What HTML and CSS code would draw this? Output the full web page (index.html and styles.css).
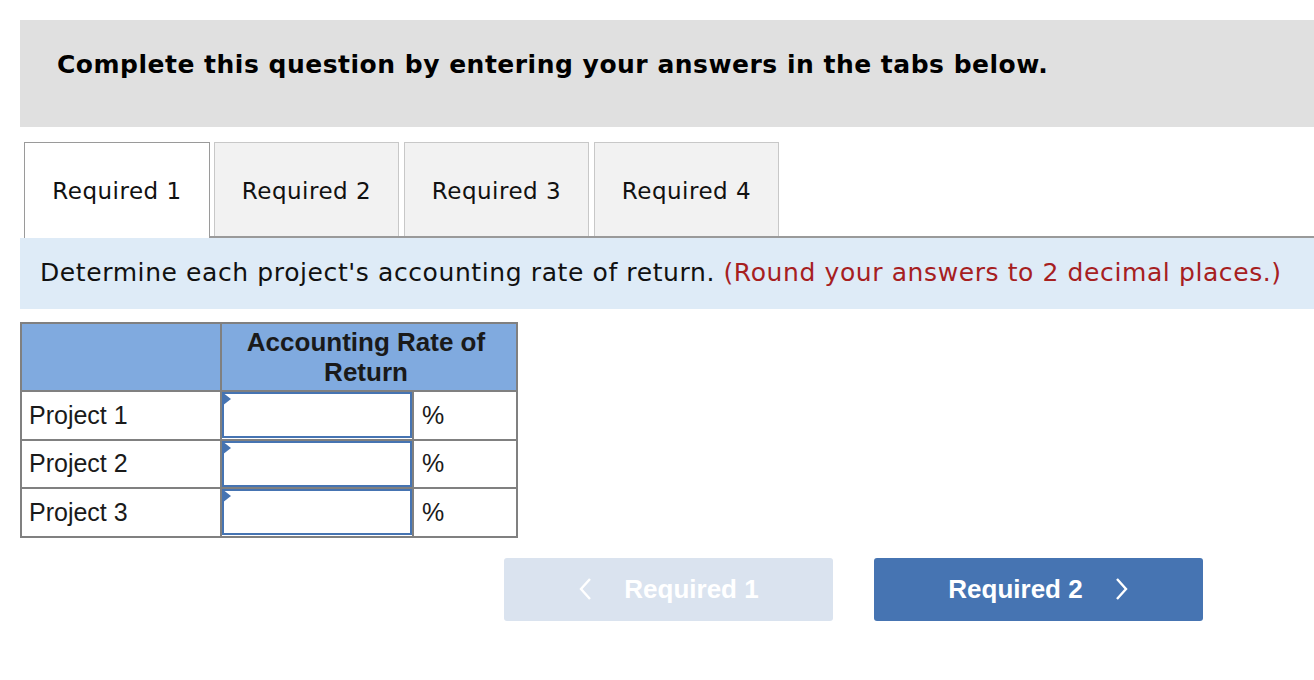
FILE: index.html
```html
<!DOCTYPE html>
<html>
<head>
<meta charset="utf-8">
<link rel="stylesheet" href="styles.css">
</head>
<body>
<div class="page">
  <div class="banner">Complete this question by entering your answers in the tabs below.</div>

  <div class="tabs">
    <div class="tab active">Required 1</div>
    <div class="tab-rest">
      <div class="tab">Required 2</div>
      <div class="tab">Required 3</div>
      <div class="tab">Required 4</div>
    </div>
  </div>

  <div class="instr">Determine each project's accounting rate of return. <span class="red">(Round your answers to 2 decimal places.)</span></div>

  <table class="grid">
    <tr class="head">
      <th class="c1"></th>
      <th colspan="2" class="title">Accounting Rate of<br>Return</th>
    </tr>
    <tr>
      <td class="c1">Project 1</td>
      <td class="inp"><div class="box"><span class="flag"></span></div></td>
      <td class="pct">%</td>
    </tr>
    <tr>
      <td class="c1">Project 2</td>
      <td class="inp"><div class="box"><span class="flag"></span></div></td>
      <td class="pct">%</td>
    </tr>
    <tr>
      <td class="c1">Project 3</td>
      <td class="inp"><div class="box"><span class="flag"></span></div></td>
      <td class="pct">%</td>
    </tr>
  </table>

  <div class="nav">
    <div class="btn prev"><svg class="chev left" width="14" height="24" viewBox="0 0 14 24"><polyline points="12,2 3,12 12,22" fill="none" stroke="#ffffff" stroke-width="2.4"/></svg>Required 1</div>
    <div class="btn next">Required 2<svg class="chev right" width="14" height="24" viewBox="0 0 14 24"><polyline points="2,2 11,12 2,22" fill="none" stroke="#ffffff" stroke-width="2.4"/></svg></div>
  </div>
</div>
</body>
</html>
```

FILE: styles.css
```css
html, body {
  margin: 0;
  padding: 0;
  background: #ffffff;
}

.page {
  padding: 20px 0 0 20px;
}

.banner {
  background: #e0e0e0;
  height: 107px;
  box-sizing: border-box;
  padding: 30px 0 0 37px;
  font-family: "DejaVu Sans", Verdana, sans-serif;
  font-weight: bold;
  font-size: 25px;
  letter-spacing: 0.5px;
  line-height: 30px;
  color: #000;
}

.tabs {
  display: flex;
  margin-top: 15px;
  padding-left: 4px;
}

.tab {
  width: 185px;
  height: 94px;
  box-sizing: border-box;
  display: flex;
  align-items: center;
  justify-content: center;
  padding-top: 2px;
  font-family: "DejaVu Sans", Verdana, sans-serif;
  font-size: 23px;
  letter-spacing: 0.5px;
  color: #111;
  background: #f2f2f2;
  border: 1px solid #c8c8c8;
  border-bottom: none;
}

.tab.active {
  width: 186px;
  height: 96px;
  padding-bottom: 2px;
  background: #ffffff;
  border: 1px solid #9a9a9a;
  border-bottom: none;
}

.tab-rest {
  flex: 1;
  display: flex;
  gap: 5px;
  padding-left: 4px;
  border-bottom: 2px solid #9a9a9a;
}

.instr {
  background: #deebf7;
  height: 71px;
  box-sizing: border-box;
  padding: 20px 0 0 20px;
  font-family: "DejaVu Sans", Verdana, sans-serif;
  font-size: 25px;
  letter-spacing: 0.6px;
  line-height: 30px;
  color: #111;
  white-space: nowrap;
}

.red {
  color: #a6201f;
}

.grid {
  margin-top: 13px;
  border-collapse: collapse;
  border: 2px solid #808080;
  font-family: "Liberation Sans", Arial, sans-serif;
  font-size: 25px;
  color: #1a1a1a;
}

.grid th, .grid td {
  border: 2px solid #808080;
  padding: 0;
}

.grid .head th {
  background: #80aadf;
  height: 66px;
  font-weight: bold;
  font-size: 26px;
  line-height: 30px;
  text-align: center;
  color: #1a1a1a;
}

.grid .head th.title {
  padding-right: 6px;
}

.grid th.c1 {
  width: 198px;
}

.grid td {
  height: 46.5px;
}

.grid td.c1 {
  padding-left: 7px;
  width: 191px;
}

.grid td.inp {
  width: 190px;
  padding: 0;
}

.box {
  position: relative;
  height: 42px;
  border: 2px solid #4674b2;
  background: #fff;
}

.flag {
  position: absolute;
  left: -2px;
  top: -2px;
  width: 0;
  height: 0;
  border-top: 7px solid transparent;
  border-bottom: 7px solid transparent;
  border-left: 9px solid #4674b2;
}

.grid td.pct {
  width: 94px;
  padding-left: 8px;
}

.nav {
  display: flex;
  gap: 41px;
  margin-top: 20px;
  padding-left: 484px;
}

.btn {
  width: 329px;
  height: 63px;
  border-radius: 3px;
  display: flex;
  align-items: center;
  justify-content: center;
  font-family: "Liberation Sans", Arial, sans-serif;
  font-weight: bold;
  font-size: 26px;
  color: #fff;
}

.btn.prev {
  background: #dae3ef;
}

.btn.next {
  background: #4674b2;
}

.chev {
  display: block;
}

.chev.left {
  margin-right: 32px;
}

.chev.right {
  margin-left: 32px;
}
```
